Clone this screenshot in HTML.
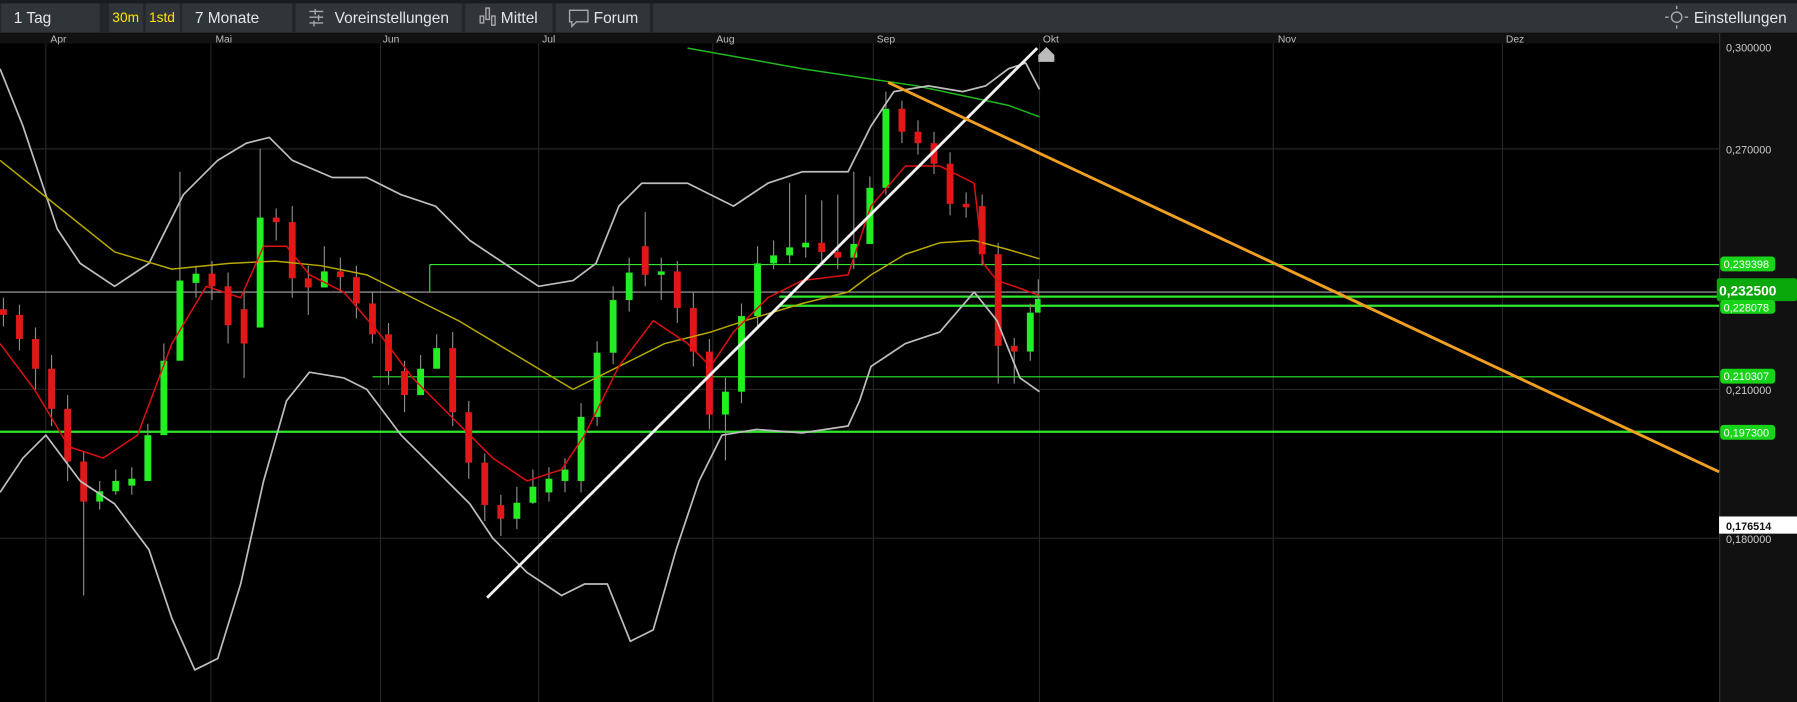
<!DOCTYPE html>
<html><head><meta charset="utf-8"><style>
html,body{margin:0;padding:0;background:#000;overflow:hidden}
svg{display:block}
text{font-family:"Liberation Sans",sans-serif}
</style></head><body>
<svg width="1797" height="702" viewBox="0 0 1568 613" preserveAspectRatio="none" xmlns="http://www.w3.org/2000/svg">
<rect width="1568" height="613" fill="#000"/>
<rect x="0" y="0" width="1568" height="29" fill="#23272b"/>
<rect x="0" y="0" width="1568" height="3" fill="#1a1d20"/>
<g fill="#30353a">
<rect x="1" y="3" width="86" height="25"/><rect x="95" y="3" width="30" height="25"/><rect x="127" y="3" width="30" height="25"/><rect x="159" y="3" width="96" height="25"/><rect x="258" y="3" width="145" height="25"/><rect x="406" y="3" width="76" height="25"/><rect x="485" y="3" width="82" height="25"/><rect x="570" y="3" width="998" height="25"/>
</g>
<g font-size="13.5" fill="#e6e6e6">
<text x="12" y="20">1 Tag</text>
<text x="98" y="19" fill="#ffe600" font-size="12">30m</text>
<text x="130" y="19" fill="#ffe600" font-size="12">1std</text>
<text x="170" y="20">7 Monate</text>
<text x="292" y="20">Voreinstellungen</text>
<text x="437" y="20">Mittel</text>
<text x="518" y="20">Forum</text>
<text x="1478" y="20">Einstellungen</text>
</g>
<g stroke="#aaa" stroke-width="1.2" fill="none">
<path d="M270 10h12M270 15h12M270 20h12M275 8v5M278 13v5M274 18v5"/>
<path d="M419 20v-6h3v6zM424 17v-10h3v10zM429 22v-8h3v8z"/>
<path d="M497 9h16v10h-10l-4 4v-4h-2z"/>
<circle cx="1463" cy="15" r="4.5"/><path d="M1456 15h-3M1470 15h3M1463 8v-3M1463 22v3"/>
</g>
<rect x="0" y="29" width="1500" height="9" fill="#111"/>
<g font-size="9" fill="#bbb">
<text x="44" y="37">Apr</text><text x="188" y="37">Mai</text><text x="334" y="37">Jun</text><text x="473" y="37">Jul</text><text x="625" y="37">Aug</text><text x="765" y="37">Sep</text><text x="910" y="37">Okt</text><text x="1115" y="37">Nov</text><text x="1314" y="37">Dez</text>
</g>
<g stroke="#262626" stroke-width="1">
<path d="M40 38V613M184 38V613M332 38V613M470 38V613M622 38V613M762 38V613M907 38V613M1111 38V613M1311 38V613"/>
<path d="M0 130H1500M0 340H1500M0 470H1500"/>
</g>
<rect x="1500" y="29" width="68" height="584" fill="#111"/>
<line x1="1500.5" y1="29" x2="1500.5" y2="613" stroke="#333"/>
<g font-size="9.5" fill="#ccc">
<text x="1506" y="45">0,300000</text>
<text x="1506" y="134">0,270000</text>
<text x="1506" y="344">0,210000</text>
<text x="1506" y="474">0,180000</text>
</g>
<line x1="0" y1="255" x2="1500" y2="255" stroke="#aaa" stroke-width="1"/>
<g stroke="#2ee82e">
<line x1="375" y1="231" x2="1500" y2="231" stroke-width="1"/>
<line x1="375" y1="231" x2="375" y2="255" stroke-width="1"/>
<line x1="680" y1="259" x2="1500" y2="259" stroke-width="2"/>
<line x1="680" y1="267" x2="1500" y2="267" stroke-width="2"/>
<line x1="325" y1="329" x2="1500" y2="329" stroke-width="1"/>
<line x1="0" y1="377" x2="1500" y2="377" stroke-width="2"/>
</g>
<g font-size="9.5" fill="#fff">
<rect x="1501" y="224" width="48" height="13" rx="3" fill="#18d418"/><text x="1504" y="234">0,239398</text>
<rect x="1498" y="243" width="70" height="20" rx="2" fill="#0aa80a"/><text x="1500" y="258" font-size="12" font-weight="bold">0,232500</text>
<rect x="1501" y="262" width="48" height="12" rx="3" fill="#18d418"/><text x="1504" y="272">0,228078</text>
<rect x="1501" y="322" width="48" height="13" rx="3" fill="#18d418"/><text x="1504" y="332">0,210307</text>
<rect x="1501" y="371" width="48" height="13" rx="3" fill="#18d418"/><text x="1504" y="381">0,197300</text>
<rect x="1500" y="451" width="68" height="15" fill="#fff"/><text x="1506" y="463" fill="#111" font-weight="bold">0,176514</text>
</g>
<!-- wicks -->
<path stroke="#8a8a8a" stroke-width="1" fill="none" d="M3 260V285M17 266V306M31 286V340M45 310V372M59 345V420M73 395V520M87 420V445M101 410V432M115 408V432M129 370V392M143 300V330M157 150V255M171 232V260M185 228V262M199 238V300M213 255V330M227 130V200M241 182V210M255 180V260M269 232V275M283 215V250M297 225V255M311 232V278M325 255V300M339 282V336M353 315V360M367 310V340M381 292V318M395 290V372M409 350V418M423 396V455M437 432V468M451 425V462M465 410V440M479 408V438M493 400V430M507 352V430M521 298V372M535 250V318M549 225V272M563 185V250M577 225V262M591 228V282M605 255V320M619 296V375M633 330V402M647 265V352M661 215V286M675 210V235M689 160V230M703 170V225M717 175V232M731 170V235M745 150V235M759 154V175M773 80V170M787 88V125M801 105V135M815 115V152M829 133V188M843 168V190M857 170V232M871 212V335M885 295V335M899 265V315M906 244V272"/>
<g fill="#22ee22">
<rect x="84" y="429" width="6" height="9"/><rect x="98" y="420" width="6" height="9"/><rect x="112" y="418" width="6" height="6"/><rect x="126" y="380" width="6" height="40"/><rect x="140" y="315" width="6" height="65"/><rect x="154" y="245" width="6" height="70"/><rect x="168" y="239" width="6" height="8"/><rect x="224" y="190" width="6" height="96"/><rect x="280" y="237" width="6" height="14"/><rect x="364" y="322" width="6" height="23"/><rect x="378" y="304" width="6" height="18"/><rect x="448" y="439" width="6" height="14"/><rect x="462" y="425" width="6" height="14"/><rect x="476" y="418" width="6" height="12"/><rect x="490" y="410" width="6" height="10"/><rect x="504" y="364" width="6" height="56"/><rect x="518" y="308" width="6" height="56"/><rect x="532" y="262" width="6" height="46"/><rect x="546" y="238" width="6" height="24"/><rect x="574" y="237" width="6" height="3"/><rect x="630" y="342" width="6" height="20"/><rect x="644" y="276" width="6" height="66"/><rect x="658" y="230" width="6" height="46"/><rect x="672" y="223" width="6" height="7"/><rect x="686" y="216" width="6" height="7"/><rect x="700" y="212" width="6" height="4"/><rect x="742" y="213" width="6" height="12"/><rect x="756" y="164" width="6" height="49"/><rect x="770" y="95" width="6" height="69"/><rect x="896" y="273" width="6" height="34"/><rect x="903" y="261" width="5" height="12"/>
</g>
<g fill="#e01818">
<rect x="0" y="270" width="6" height="5"/><rect x="14" y="275" width="6" height="21"/><rect x="28" y="296" width="6" height="26"/><rect x="42" y="322" width="6" height="35"/><rect x="56" y="357" width="6" height="46"/><rect x="70" y="403" width="6" height="35"/><rect x="182" y="239" width="6" height="11"/><rect x="196" y="250" width="6" height="34"/><rect x="210" y="270" width="6" height="30"/><rect x="238" y="190" width="6" height="4"/><rect x="252" y="194" width="6" height="49"/><rect x="266" y="243" width="6" height="8"/><rect x="294" y="237" width="6" height="5"/><rect x="308" y="242" width="6" height="23"/><rect x="322" y="265" width="6" height="27"/><rect x="336" y="292" width="6" height="32"/><rect x="350" y="324" width="6" height="21"/><rect x="392" y="304" width="6" height="56"/><rect x="406" y="360" width="6" height="44"/><rect x="420" y="404" width="6" height="37"/><rect x="434" y="441" width="6" height="12"/><rect x="560" y="215" width="6" height="25"/><rect x="588" y="237" width="6" height="32"/><rect x="602" y="269" width="6" height="38"/><rect x="616" y="307" width="6" height="55"/><rect x="714" y="212" width="6" height="8"/><rect x="728" y="220" width="6" height="5"/><rect x="784" y="95" width="6" height="20"/><rect x="798" y="115" width="6" height="10"/><rect x="812" y="125" width="6" height="18"/><rect x="826" y="143" width="6" height="35"/><rect x="840" y="178" width="6" height="3"/><rect x="854" y="180" width="6" height="42"/><rect x="868" y="222" width="6" height="80"/><rect x="882" y="302" width="6" height="5"/>
</g>
<g fill="none" stroke-linejoin="round">
<polyline stroke="#1fb81f" stroke-width="1.3" points="600,42 700,60 800,75 880,92 907,102"/>
<polyline stroke="#bdbdbd" stroke-width="1.5" points="0,60 20,110 50,200 70,230 100,250 130,230 160,170 190,140 215,125 235,120 255,140 290,155 320,155 350,170 380,180 410,210 440,230 470,250 500,245 520,230 540,180 560,160 600,160 640,180 670,160 700,150 740,150 760,110 780,80 810,75 840,80 860,75 880,60 895,55 907,78"/>
<polyline stroke="#bdbdbd" stroke-width="1.5" points="0,430 20,400 40,380 70,420 100,440 130,480 150,540 170,585 190,575 210,510 230,420 250,350 270,325 300,330 320,340 350,380 380,410 410,440 430,470 460,500 490,520 510,510 530,510 550,560 570,550 590,480 610,420 630,380 660,375 700,378 740,372 750,350 760,320 790,300 820,290 850,255 870,280 890,330 907,342"/>
<polyline stroke="#b8a800" stroke-width="1.3" points="0,140 50,180 100,220 150,235 200,230 240,228 280,232 320,240 360,260 400,280 450,310 500,340 540,320 580,300 620,290 650,280 700,265 740,255 760,240 790,222 820,212 850,210 880,218 907,226"/>
<polyline stroke="#e01010" stroke-width="1.3" points="0,300 30,340 60,390 90,400 120,380 150,300 180,250 210,260 230,215 250,215 270,240 300,255 330,290 360,330 400,370 430,400 460,420 490,410 510,380 540,320 570,280 600,300 620,320 640,290 670,260 700,245 740,240 760,180 790,145 820,145 850,160 858,230 870,245 885,250 907,258"/>
<line x1="425" y1="522" x2="905" y2="42" stroke="#f0f0f0" stroke-width="2.5"/>
<line x1="775" y1="72" x2="1500" y2="412" stroke="#f0a020" stroke-width="2.5"/>
</g>
<path d="M906 54h14v-6l-7-7-7 7z" fill="#bbb"/>
</svg>
</body></html>
